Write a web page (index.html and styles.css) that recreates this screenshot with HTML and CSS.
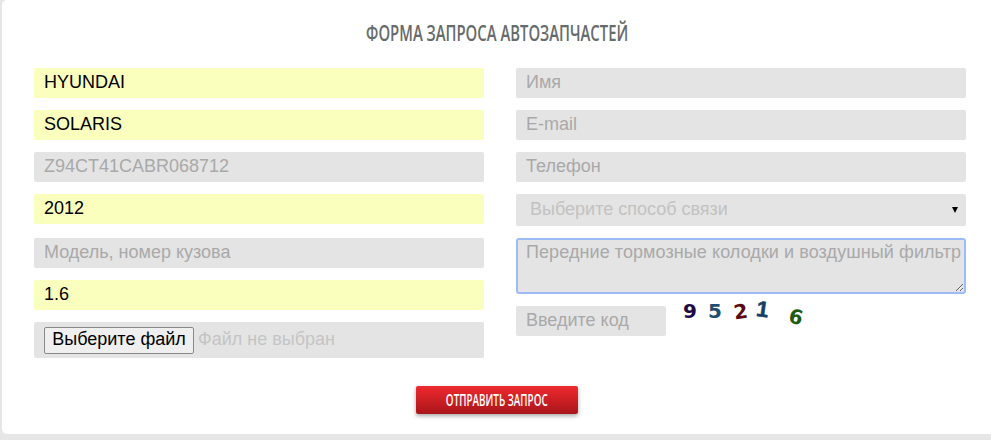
FILE: index.html
```html
<!DOCTYPE html>
<html lang="ru">
<head>
<meta charset="utf-8">
<title>Форма запроса автозапчастей</title>
<link rel="stylesheet" href="styles.css">
</head>
<body>
<form class="card">
  <h1 class="title"><span class="title-text">ФОРМА ЗАПРОСА АВТОЗАПЧАСТЕЙ</span></h1>
  <div class="columns">
    <div class="column">
      <input class="field filled" type="text" value="HYUNDAI">
      <input class="field filled" type="text" value="SOLARIS">
      <input class="field" type="text" placeholder="Z94CT41CABR068712">
      <input class="field filled" type="text" value="2012">
      <input class="field gap-extra" type="text" placeholder="Модель, номер кузова">
      <input class="field filled" type="text" value="1.6">
      <div class="file-row">
        <button class="file-button" type="button">Выберите файл</button>
        <span class="file-name">Файл не выбран</span>
      </div>
    </div>
    <div class="column">
      <input class="field" type="text" placeholder="Имя">
      <input class="field" type="text" placeholder="E-mail">
      <input class="field" type="text" placeholder="Телефон">
      <div class="select-box">
        <span class="select-text">Выберите способ связи</span>
        <span class="select-arrow"></span>
      </div>
      <textarea class="message" placeholder="Передние тормозные колодки и воздушный фильтр"></textarea>
      <div class="captcha-row">
        <input class="field code" type="text" placeholder="Введите код">
        <div class="captcha">
          <span class="digit d1">9</span>
          <span class="digit d2">5</span>
          <span class="digit d3">2</span>
          <span class="digit d4">1</span>
          <span class="digit d5">6</span>
        </div>
      </div>
    </div>
  </div>
  <div class="actions">
    <button class="submit" type="button"><span class="submit-text">ОТПРАВИТЬ ЗАПРОС</span></button>
  </div>
</form>
</body>
</html>
```
FILE: styles.css
```css
* { box-sizing: border-box; }
html, body { margin: 0; padding: 0; }
body {
  width: 991px;
  height: 440px;
  overflow: hidden;
  background: #e6e6e6;
  padding-left: 2px;
  font-family: "Liberation Sans", Arial, sans-serif;
}
.card {
  height: 434px;
  background: #fff;
  border-radius: 5px 0 0 5px;
  padding: 20px 25px 0 32px;
}
.title {
  margin: 0;
  height: 48px;
  padding-right: 6px;
  text-align: center;
  font: 600 22px/24px "Open Sans", sans-serif;
  color: #666b6b;
}
.title-text {
  display: inline-block;
  transform: scaleX(.675);
  white-space: nowrap;
}
.columns { display: flex; gap: 32px; }
.column {
  width: 450px;
  display: flex;
  flex-direction: column;
  gap: 12px;
}
.field, .message, .select-box, .file-row {
  background: #e4e4e4;
  border: 0;
  border-radius: 2px;
  font: 18px "Liberation Sans", Arial, sans-serif;
  outline: 0;
}
.field {
  width: 100%;
  height: 30px;
  padding: 0 10px 2px;
  color: #000;
}
.field::placeholder, .message::placeholder { color: #a9a9a9; opacity: 1; }
.filled { background: #fbffbd; }
.gap-extra { margin-top: 2px; }
.file-row {
  height: 36px;
  display: flex;
  align-items: center;
  padding-left: 10px;
}
.file-button {
  width: 150px;
  height: 27px;
  padding: 0 0 1px;
  font: 18px "Liberation Sans", Arial, sans-serif;
  color: #000;
  background: #efefef;
  border: 1px solid #8a8a8a;
  border-radius: 2px;
}
.file-name { margin-left: 4px; margin-top: -1px; color: #c4c4c4; }
.select-box {
  height: 32px;
  display: flex;
  align-items: center;
  justify-content: space-between;
  padding: 0 8px 2px 14px;
}
.select-text { color: #c2c2c2; }
.select-arrow {
  width: 0;
  height: 0;
  margin-top: 2px;
  border: 3px solid transparent;
  border-top: 6px solid #000;
  border-bottom: 0;
}
.message {
  display: block;
  width: 100%;
  height: 56px;
  resize: both;
  padding: 2px 0 1px 8px;
  color: #000;
  letter-spacing: .08px;
  border: 2px solid #9dbcf7;
  border-radius: 3px;
  overflow: hidden;
}
.captcha-row { display: flex; align-items: flex-start; }
.code { width: 150px; }
.captcha {
  display: flex;
  margin-left: 17px;
  margin-top: -7px;
  font: 900 20px/24px "DejaVu Sans", sans-serif;
}
.digit { display: block; }
.d1 { color: #1f0a46; width: 25px; }
.d2 { color: #1f4e70; width: 26px; }
.d3 { color: #5a0a10; width: 22px; transform: rotate(-8deg); }
.d4 {
  color: #153f66;
  width: 33px;
  font: 700 22px/24px "Liberation Sans", sans-serif;
  -webkit-text-stroke: .6px #153f66;
  transform: rotate(8deg);
}
.d5 { color: #1e5a10; transform: rotate(14deg); margin-top: 6px; }
.actions { display: flex; justify-content: center; padding: 28px 0 0 0; }
.submit {
  display: flex;
  justify-content: center;
  width: 162px;
  height: 28px;
  margin-right: 6px;
  padding: 0;
  border: 0;
  border-radius: 2px;
  background: linear-gradient(#ee2a2f, #a9151a);
  box-shadow: 0 2px 4px rgba(0,0,0,.35);
  color: #fff;
  font: 600 17px/27px "Open Sans", sans-serif;
}
.submit-text {
  display: block;
  flex: none;
  transform: scaleX(.58);
  white-space: nowrap;
}
```
